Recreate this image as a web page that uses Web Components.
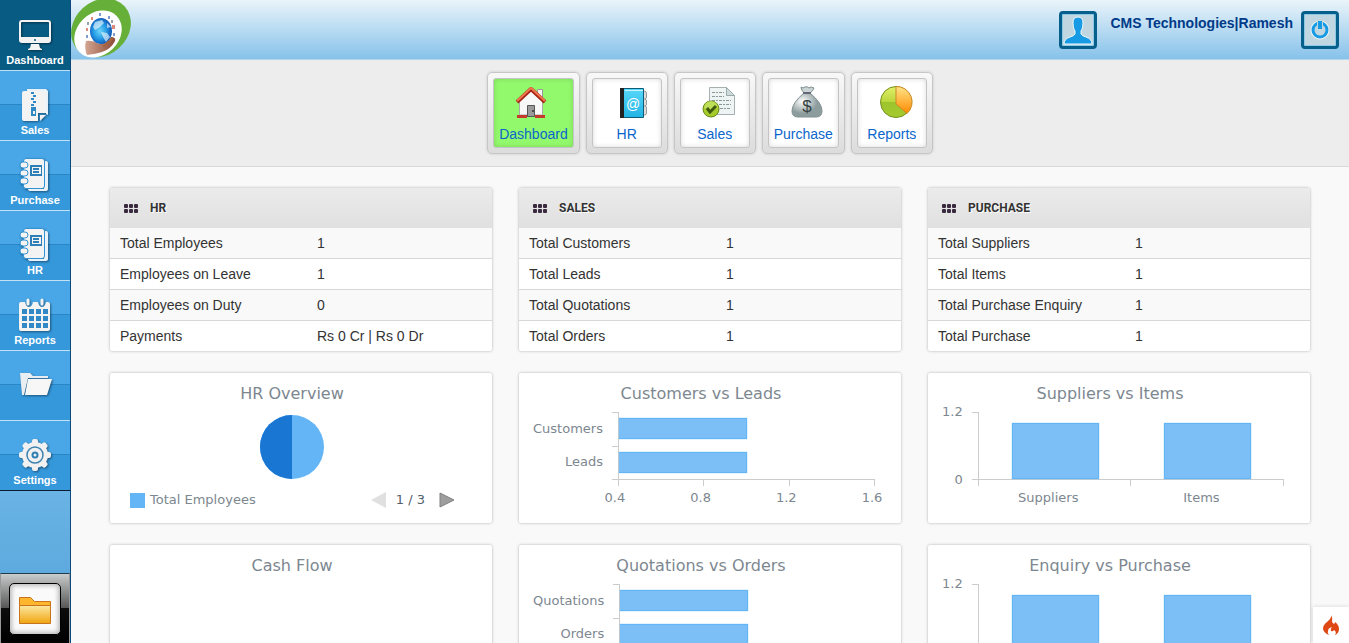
<!DOCTYPE html>
<html lang="en">
<head>
<meta charset="utf-8">
<meta name="viewport" content="width=device-width, initial-scale=1">
<title>Dashboard</title>
<style>
  body {
    margin: 0;
    font-family: "Liberation Sans", Arial, sans-serif;
    font-size: 14px;
    color: #333;
    background: #f9f9f9;
  }
</style>
</head>
<body>
<app-shell>
  <side-bar slot="side">
    <side-item icon="monitor" label="Dashboard" active></side-item>
    <side-item icon="zip" label="Sales"></side-item>
    <side-item icon="notebook" label="Purchase"></side-item>
    <side-item icon="notebook" label="HR"></side-item>
    <side-item icon="calendar" label="Reports"></side-item>
    <side-item icon="folder"></side-item>
    <side-item icon="gear" label="Settings"></side-item>
  </side-bar>
  <top-bar slot="top">CMS Technologies|Ramesh</top-bar>
  <tab-bar slot="tabs">
    <tab-item icon="house" active>Dashboard</tab-item>
    <tab-item icon="book">HR</tab-item>
    <tab-item icon="document">Sales</tab-item>
    <tab-item icon="money">Purchase</tab-item>
    <tab-item icon="pie">Reports</tab-item>
  </tab-bar>
  <stat-panel heading="HR" rows="Total Employees:1;Employees on Leave:1;Employees on Duty:0;Payments:Rs 0 Cr | Rs 0 Dr"></stat-panel>
  <stat-panel heading="SALES" rows="Total Customers:1;Total Leads:1;Total Quotations:1;Total Orders:1"></stat-panel>
  <stat-panel heading="PURCHASE" rows="Total Suppliers:1;Total Items:1;Total Purchase Enquiry:1;Total Purchase:1"></stat-panel>
  <chart-card heading="HR Overview"><pie-chart legend="Total Employees" pages="3"></pie-chart></chart-card>
  <chart-card heading="Customers vs Leads"><bar-chart min="0.4" max="1.6" ticks="0.4,0.8,1.2,1.6" data="Customers:1;Leads:1"></bar-chart></chart-card>
  <chart-card heading="Suppliers vs Items"><column-chart max="1.2" data="Suppliers:1;Items:1"></column-chart></chart-card>
  <chart-card heading="Cash Flow"></chart-card>
  <chart-card heading="Quotations vs Orders"><bar-chart min="0.4" max="1.6" ticks="0.4,0.8,1.2,1.6" data="Quotations:1;Orders:1"></bar-chart></chart-card>
  <chart-card heading="Enquiry vs Purchase"><column-chart max="1.2" data="Enquiry:1;Purchase:1"></column-chart></chart-card>
  <flame-badge slot="badge"></flame-badge>
</app-shell>

<script>
const sideIcons = {
  monitor: `
    <path fill="#f3f3f3" fill-rule="evenodd" d="M3 1h26q3 0 3 3v17q0 3-3 3H3q-3 0-3-3V4q0-3 3-3zM3 3q-1 0-1 1v14h28V4q0-1-1-1z"/>
    <circle cx="16" cy="21" r="1" fill="#0a5c80"/>
    <path fill="#f3f3f3" d="M12 25h8l1 4 2 1v1H9v-1l2-1z"/>`,
  zip: `
    <path fill="#e8f2fa" d="M8 0h19l2 2v24l-2-1V2H8z"/>
    <path fill="#f3f3f3" d="M5 2h22v22h-8v8H5q-2 0-2-2V4q0-2 2-2z"/>
    <path fill="#f3f3f3" d="M21 26h6l-6 6z"/>
    <path fill="#3089c4" d="M12 3h3v2h-3zm2 3h3v2h-3zm-2 3h3v2h-3zm2 3h3v2h-3zm-2 3h3v2h-3z"/>
    <path fill="#3089c4" fill-rule="evenodd" d="M12 18h5v9h-5zm2 4v3h2v-3z"/>`,
  notebook: `
    <path fill="#e8f2fa" d="M25 2h2q2 0 2 2v26q0 2-2 2H12q-3 0-3-2h16z"/>
    <path fill="#f3f3f3" stroke="#3393d2" d="M7-.5h16q2.500 0 2.500 2.500v25q0 2.500-2.500 2.500H7q-2.500 0-2.500-2.500V2Q4.500-.5 7-.5z"/>
    <g fill="#f3f3f3" stroke="#3393d2"><rect x="1" y="3" width="8" height="6" rx="3"/><rect x="1" y="11" width="8" height="6" rx="3"/><rect x="1" y="19" width="8" height="6" rx="3"/></g>
    <path fill="#2e7eb7" fill-rule="evenodd" d="M11 6h12v11H11zm2 2v7h9V8z"/>
    <path stroke="#2e7eb7" stroke-width="2" d="M14 10h6M14 13h6"/>`,
  calendar: `
    <path fill="#f3f3f3" d="M2 3h4q1 5 4 5t4-5h5q1 5 4 5t4-5h2q2 0 2 2v25q0 2-2 2H2q-2 0-2-2V5q0-2 2-2z"/>
    <path stroke="#f3f3f3" stroke-width="3" stroke-linecap="round" d="M9 1v4M23 1v4"/>
    <path fill="#3089c4" d="M3 10h5v5H3zm7 0h5v5h-5zm7 0h5v5h-5zm7 0h5v5h-5zM3 17h5v5H3zm7 0h5v5h-5zm7 0h5v5h-5zm7 0h5v5h-5zM3 24h5v5H3zm7 0h5v5h-5zm7 0h5v5h-5zm7 0h5v5h-5z"/>`,
  folder: `
    <path fill="#e8eef2" d="M1 4h10l3 3h15v2H9L5 26H3z"/>
    <path fill="#f7f7f7" d="M9 10h24l-5 16H6z"/>`,
  gear: `
    <g fill="#f1f1f1">
      <circle cx="16" cy="16" r="13"/>
      <rect x="13" width="6" height="32" rx="2"/>
      <rect x="13" width="6" height="32" rx="2" transform="rotate(45 16 16)"/>
      <rect x="13" width="6" height="32" rx="2" transform="rotate(90 16 16)"/>
      <rect x="13" width="6" height="32" rx="2" transform="rotate(135 16 16)"/>
    </g>
    <circle cx="16" cy="16" r="8" fill="none" stroke="#3d82b0" stroke-width="1.500"/>
    <circle cx="16" cy="16" r="2.500" fill="none" stroke="#2f7fb5" stroke-width="2"/>`
};

const tabIcons = {
  house: `
    <path fill="#f4f4f4" stroke="#999" d="M22.500 3.500h5v12h-5z"/>
    <path fill="#f8f8f8" stroke="#aaa" d="M4.500 14 16 3l11.500 11v15h-23z"/>
    <path fill="#9a9a9a" stroke="#555" d="M12.500 19.500h7v11h-7z"/>
    <circle cx="18" cy="25" r="1" fill="#333"/>
    <path fill="none" stroke="#a52516" stroke-width="4" stroke-linejoin="round" d="M2 16 16 3l14 13"/>
    <path fill="none" stroke="#f07850" stroke-width="2" stroke-linejoin="round" d="M2 15 16 2l14 13"/>
    <path fill="#c63a2b" d="M2 29h10v3H2zm18 0h10v3H20z"/>`,
  book: `
    <path fill="#ddd" stroke="#999" d="M27 5h2.500q2 0 2 3v4l-2 1 2 1v5l-2 1 2 1v6q0 2-2 2H27z"/>
    <defs><linearGradient id="bk" x2="0" y2="1"><stop stop-color="#58d8fb"/><stop offset="1" stop-color="#22b4e4"/></linearGradient></defs>
    <path fill="url(#bk)" stroke="#0c5d78" d="M5.500 2.500h23v29h-23z"/>
    <path stroke="#c9f3ff" d="M10 4.500h18"/>
    <path fill="#222" d="M5 2h4v30H5z"/>
    <text x="18" y="23" font-family="Liberation Sans" font-size="14" fill="#fff" text-anchor="middle">@</text>`,
  document: `
    <path fill="#eef3f3" stroke="#a5b1b1" d="M6.500 1.500h17l8 8v19h-25z"/>
    <path fill="#d0dada" stroke="#9aa" d="M23.500 1.500v8h8z"/>
    <path stroke="#8c9999" stroke-dasharray="3 1 2 1" d="M9 6.500h12M9 10.500h12M9 14.500h19M9 18.500h19M17 22.500h11"/>
    <circle cx="8" cy="23" r="8" fill="#a5cc2b" stroke="#688a12"/>
    <path fill="#cbe66b" opacity=".7" d="M1 22a7 7 0 0 1 14 0q-7 3-14 0z"/>
    <path fill="none" stroke="#3f5a0b" stroke-width="3" d="m4 22 3 4 6-6"/>`,
  money: `
    <defs><radialGradient id="bag" cx=".35" cy=".35"><stop stop-color="#fff"/><stop offset="1" stop-color="#8d9c9d"/></radialGradient></defs>
    <path fill="#ccd5d5" stroke="#7d8c8c" d="M10 1q2 2 4 0 2-1 4 1 2-2 5 0-1 3-4 5h-6q-3-3-3-6z"/>
    <path fill="url(#bag)" stroke="#819090" d="M13 7h6q12 10 12 18 0 6-6 6H7q-6 0-6-6Q1 17 13 7z"/>
    <path stroke="#667" stroke-width="2" d="M12 7h8"/>
    <text x="16" y="26" font-family="Liberation Sans" font-size="17" fill="#354242" text-anchor="middle">$</text>`,
  pie: `
    <defs>
      <linearGradient id="pg" x2="0" y2="1"><stop stop-color="#e2ef68"/><stop offset=".5" stop-color="#bad63c"/><stop offset=".5" stop-color="#9cc42c"/><stop offset="1" stop-color="#a5cb2e"/></linearGradient>
      <linearGradient id="po" x2="0" y2="1"><stop stop-color="#ffe487"/><stop offset="1" stop-color="#ff8a00"/></linearGradient>
    </defs>
    <circle cx="16" cy="16" r="15.500" fill="url(#pg)" stroke="#76901f"/>
    <path fill="url(#po)" stroke="#c98a28" d="M16 .5a15.500 15.500 0 0 1 11 27L16 18z"/>`
};

const pairs = (text) => (text || '').split(';').filter(Boolean).map((row) => row.split(':'));

class AppShell extends HTMLElement {
  constructor() {
    super();
    this.attachShadow({ mode: 'open' }).innerHTML = `
      <style>
        :host {
          display: grid;
          grid-template-columns: auto 1fr;
          height: 100vh;
        }
        .page {
          min-width: 0;
          overflow: hidden auto;
          scrollbar-width: none;
        }
        main {
          display: grid;
          grid-template-columns: repeat(3, minmax(0, 1fr));
          gap: 22px 27px;
          padding: 21px 39px;
        }
      </style>
      <slot name="side"></slot>
      <div class="page">
        <slot name="top"></slot>
        <slot name="tabs"></slot>
        <main><slot></slot></main>
      </div>
      <slot name="badge"></slot>
    `;
  }
}

class SideBar extends HTMLElement {
  constructor() {
    super();
    this.attachShadow({ mode: 'open' }).innerHTML = `
      <style>
        :host {
          display: flex;
          flex-direction: column;
          width: 70px;
          min-height: 0;
          overflow: hidden;
          border-right: 1px solid #0b4a7a;
          background: #3598db;
        }
        .fill {
          flex: 1;
          border-top: 1px solid #0b1a2c;
          background: linear-gradient(#69b3e5, #5eaade);
        }
        .dock {
          display: grid;
          place-items: center;
          height: 70px;
          padding: 0;
          border: 1px solid #999;
          border-width: 0 1px;
          border-top: 1px solid #1f3a4d;
          background: linear-gradient(#c9cccc, #555 50%, #0c0c0c 50%, #000);
        }
        .dock svg {
          padding: 8px;
          border: 1px solid #000;
          border-radius: 5px;
          background: #fafafa;
          box-shadow: inset 0 0 4px 2px #bbb;
        }
      </style>
      <nav><slot></slot></nav>
      <div class="fill"></div>
      <button class="dock" aria-label="Files">
        <svg width="34" height="34" viewBox="0 0 34 34">
          <defs><linearGradient id="fo" x2="0" y2="1"><stop stop-color="#fbe7a0"/><stop offset="1" stop-color="#f0a510"/></linearGradient></defs>
          <path fill="#ffb52e" stroke="#c8741d" d="M1.500 5.500h11l4 4h16v6h-31z"/>
          <path fill="url(#fo)" stroke="#c8741d" d="M1.500 13.500h31v18h-31z"/>
        </svg>
      </button>
    `;
  }
}

class SideItem extends HTMLElement {
  connectedCallback() {
    const label = this.getAttribute('label') || '';
    this.attachShadow({ mode: 'open' }).innerHTML = `
      <style>
        :host { display: block; }
        a {
          display: flex;
          flex-direction: column;
          align-items: center;
          box-sizing: border-box;
          height: 70px;
          padding-top: 18px;
          border-top: 1px solid #c3e1f5;
          background: linear-gradient(#49a7e8 33px, #2b86c5 33px 34px, #3598db 34px);
          color: #fff;
          font-size: 11px;
          font-weight: bold;
          line-height: 18px;
          text-decoration: none;
        }
        :host([active]) a {
          background: #085c84;
          border-color: #085c84;
        }
        svg {
          flex: none;
          overflow: visible;
          filter: drop-shadow(1px 1px 1px rgba(0, 0, 0, .45));
        }
      </style>
      <a href="#" aria-label="${label || 'Documents'}">
        <svg width="32" height="32" viewBox="0 0 32 32">${sideIcons[this.getAttribute('icon')]}</svg>
        <span>${label}</span>
      </a>
    `;
  }
}

class TopBar extends HTMLElement {
  constructor() {
    super();
    this.attachShadow({ mode: 'open' }).innerHTML = `
      <style>
        :host { display: block; }
        header {
          display: flex;
          align-items: flex-start;
          height: 59px;
          padding-right: 10px;
          border-bottom: 1px solid #b5d5ea;
          background: linear-gradient(#eaf4fa, #86c2ea);
        }
        .logo { margin-right: auto; }
        .logo svg { display: block; }
        .box {
          display: grid;
          place-items: center;
          box-sizing: border-box;
          width: 38px;
          height: 38px;
          margin-top: 11px;
          padding: 0;
          border: 3px solid #075f8b;
          border-radius: 4px;
          background: #c0d6e0;
          box-shadow: inset 0 0 0 1px #8ec9e6;
        }
        .user {
          margin: 14px 8px 0 13px;
          color: #003a88;
          font-size: 14px;
          font-weight: bold;
          line-height: 18px;
          text-decoration: none;
        }
      </style>
      <header>
        <a class="logo" href="#" aria-label="Home">
          <svg width="61" height="59" viewBox="0 0 61 59">
            <defs>
              <radialGradient id="gl" cx=".45" cy=".5"><stop stop-color="#6fd5f8"/><stop offset=".6" stop-color="#249be5"/><stop offset="1" stop-color="#1460bd"/></radialGradient>
              <linearGradient id="hd"><stop stop-color="#d3a592"/><stop offset="1" stop-color="#8c4b36"/></linearGradient>
            </defs>
            <ellipse cx="30" cy="28" rx="32" ry="27" transform="rotate(-42 30 28)" fill="#66b03a"/>
            <ellipse cx="27" cy="34" rx="26" ry="21" transform="rotate(-44 27 34)" fill="#fff"/>
            <g fill="#e08a7a"><path d="M20 17h2v3h-2zM15 28h2v3h-2zM41 25h3v4h-3z"/></g>
            <g fill="#7f9ccc"><path d="M28 13h2v3h-2zM37 16h2v3h-2zM15 35h2v3h-2zM42 33h2v3h-2z"/></g>
            <g fill="#9aa0ae"><path d="M16 22h2v3h-2zM40 20h2v3h-2z"/></g>
            <path fill="url(#hd)" d="M15 41q7-1 13 3 8-1 12-7 5 0 4 4-4 8-13 11-6 2-15 3-3-7-1-14z"/>
            <ellipse cx="30" cy="31" rx="11" ry="13" fill="url(#gl)"/>
            <path fill="#fff" opacity=".6" d="m24 22 7-2 2 3-4 4-5 3-2-3zm6 10 6 1 3 4-4 5-3-5zM36 23l4 4-4 1z"/>
            <path fill="none" stroke="#a8643e" stroke-width="2" stroke-linecap="round" d="m33 46 8-7"/>
          </svg>
        </a>
        <span class="box">
          <svg width="30" height="30" viewBox="0 0 30 30">
            <path fill="#189be5" stroke="#eef8fc" d="M10 8q0-6 5-6t5 6q0 6-2 8v3q1 2 5 3 6 2 6 7H1q0-5 6-7 4-1 5-3v-3q-2-2-2-8z"/>
          </svg>
        </span>
        <a class="user" href="#"><slot></slot></a>
        <button class="box" aria-label="Log out">
          <svg width="22" height="22" viewBox="0 0 22 22" fill="none">
            <circle cx="11" cy="11" r="8" stroke="#eaf6fb" stroke-width="3"/>
            <circle cx="11" cy="11" r="7" stroke="#189be5" stroke-width="3"/>
            <path stroke="#c0d6e0" stroke-width="6" d="M11 1v7"/>
            <path stroke="#189be5" stroke-width="4" d="M11 2v8"/>
          </svg>
        </button>
      </header>
    `;
  }
}

class TabBar extends HTMLElement {
  constructor() {
    super();
    this.attachShadow({ mode: 'open' }).innerHTML = `
      <style>
        :host { display: block; }
        nav {
          display: flex;
          justify-content: center;
          gap: 6px;
          padding: 12px 0;
          border-bottom: 1px solid #d8d8d8;
          background: #ededed;
        }
      </style>
      <nav><slot></slot></nav>
    `;
  }
}

class TabItem extends HTMLElement {
  connectedCallback() {
    this.attachShadow({ mode: 'open' }).innerHTML = `
      <style>
        :host {
          display: block;
          padding: 5px;
          border: 1px solid #c6c6c6;
          border-radius: 5px;
          background: linear-gradient(#f8f8f8, #dcdcdc);
          box-shadow: 0 0 3px rgba(0, 0, 0, .15);
        }
        a {
          display: flex;
          flex-direction: column;
          align-items: center;
          box-sizing: border-box;
          height: 70px;
          min-width: 70px;
          padding: 7px 5px 0;
          border: 1px solid #c4c4c4;
          border-radius: 3px;
          background: #fff;
          box-shadow: inset 0 0 5px rgba(0, 0, 0, .15);
          color: #0a66cc;
          line-height: 16px;
          text-decoration: none;
        }
        svg {
          flex: none;
          margin: 0 0 8px 8px;
          overflow: visible;
        }
        :host([active]) a { background: #92f96c; }
        :host([active]) svg { margin: 0 4px 8px 0; }
      </style>
      <a href="#">
        <svg width="32" height="32" viewBox="0 0 32 32">${tabIcons[this.getAttribute('icon')]}</svg>
        <slot></slot>
      </a>
    `;
  }
}

class StatPanel extends HTMLElement {
  connectedCallback() {
    const rows = pairs(this.getAttribute('rows'))
      .map(([name, value]) => `<tr><th scope="row">${name}</th><td>${value}</td></tr>`)
      .join('');
    this.attachShadow({ mode: 'open' }).innerHTML = `
      <style>
        :host {
          display: block;
          border-radius: 2px;
          background: #fff;
          box-shadow: 0 0 3px rgba(0, 0, 0, .3);
        }
        h2 {
          display: flex;
          align-items: center;
          gap: 11px;
          height: 40px;
          margin: 0;
          padding-left: 14px;
          background: linear-gradient(#ebebeb, #e0e0e0);
          color: #333;
          font: bold 12px/16px Roboto, sans-serif;
          text-shadow: 1px 1px 0 #fff;
        }
        table {
          width: 100%;
          table-layout: fixed;
          border-collapse: collapse;
        }
        th, td {
          height: 30px;
          padding: 0 10px;
          border-bottom: 1px solid #d8d8d8;
          font-weight: normal;
          line-height: 16px;
          text-align: left;
          white-space: nowrap;
        }
        th { width: 177px; }
        tr:nth-child(odd) { background: #f9f9f9; }
        tr:last-child > * { border-bottom: 0; }
      </style>
      <h2>
        <svg width="15" height="9" viewBox="0 0 15 9" fill="#3a2a3e">
          <rect width="4" height="4" rx="1"/><rect x="5" width="4" height="4" rx="1"/><rect x="10" width="4" height="4" rx="1"/>
          <rect y="5" width="4" height="4" rx="1"/><rect x="5" y="5" width="4" height="4" rx="1"/><rect x="10" y="5" width="4" height="4" rx="1"/>
        </svg>
        ${this.getAttribute('heading')}
      </h2>
      <table><tbody>${rows}</tbody></table>
    `;
  }
}

class ChartCard extends HTMLElement {
  connectedCallback() {
    this.attachShadow({ mode: 'open' }).innerHTML = `
      <style>
        :host {
          display: block;
          box-sizing: border-box;
          min-height: 150px;
          padding: 11px 18px 12px 0;
          border-radius: 2px;
          background: #fff;
          box-shadow: 0 0 3px rgba(0, 0, 0, .3);
          color: #7d8790;
          font-family: "DejaVu Sans", Verdana, sans-serif;
          font-size: 13px;
          line-height: 16px;
        }
        h3 {
          margin: 0 0 8px;
          font-size: 16px;
          font-weight: normal;
          line-height: 20px;
          text-align: center;
        }
      </style>
      <h3>${this.getAttribute('heading')}</h3>
      <slot></slot>
    `;
  }
}

class PieChart extends HTMLElement {
  connectedCallback() {
    this.attachShadow({ mode: 'open' }).innerHTML = `
      <style>
        :host {
          display: block;
          padding-top: 3px;
        }
        .pie {
          display: block;
          margin: 0 auto 13px;
        }
        .legend {
          display: flex;
          align-items: center;
          padding: 0 19px 0 20px;
        }
        .key {
          width: 15px;
          height: 15px;
          margin-right: 5px;
          background: #64b5f6;
        }
        .pager {
          display: flex;
          align-items: center;
          gap: 10px;
          margin-left: auto;
          color: #545f69;
        }
        button {
          display: block;
          padding: 0;
          border: 0;
          background: none;
        }
        button svg { display: block; }
        .next { margin-left: 4px; }
      </style>
      <svg class="pie" width="64" height="64" viewBox="0 0 64 64">
        <circle cx="32" cy="32" r="32" fill="#64b5f6"/>
        <path fill="#1976d2" d="M32 0a32 32 0 0 0 0 64z"/>
      </svg>
      <div class="legend">
        <span class="key"></span>${this.getAttribute('legend')}
        <div class="pager">
          <button aria-label="Previous" disabled><svg width="15" height="16" viewBox="0 0 15 16"><path fill="#e0e0e0" d="M15 0v16L0 8z"/></svg></button>
          <span>1 / ${this.getAttribute('pages')}</span>
          <button class="next" aria-label="Next"><svg width="16" height="16" viewBox="0 0 16 16"><path fill="#9e9e9e" stroke="#808080" d="M1 1v14l14-7z"/></svg></button>
        </div>
      </div>
    `;
  }
}

class BarChart extends HTMLElement {
  connectedCallback() {
    const min = Number(this.getAttribute('min'));
    const max = Number(this.getAttribute('max'));
    const data = pairs(this.getAttribute('data'));
    const ticks = this.getAttribute('ticks').split(',');
    this.attachShadow({ mode: 'open' }).innerHTML = `
      <style>
        :host {
          display: grid;
          grid-template-columns: auto 1fr;
          padding: 0 8px 0 14px;
        }
        .names, .plot {
          display: grid;
          grid-auto-rows: 1fr;
          height: 67px;
          align-items: center;
        }
        .names {
          padding-right: 9px;
          text-align: right;
        }
        .plot { border-bottom: 1px solid #ccc; }
        .row {
          display: flex;
          align-items: center;
          align-self: stretch;
        }
        /* category tick and its piece of the axis line */
        .row::before {
          content: "";
          align-self: stretch;
          width: 6px;
          border-top: 1px solid #ccc;
          border-right: 1px solid #ccc;
        }
        .track { flex: 1; }
        .bar {
          box-sizing: border-box;
          height: 21px;
          border: 1px solid #64b5f6;
          border-left: 0;
          background: #7cbff7;
          box-shadow: 0 0 1px #64b5f6;
        }
        .scale {
          grid-column: 2;
          display: flex;
          justify-content: space-between;
          margin-left: 6px;
        }
        .scale i {
          width: 1px;
          height: 6px;
          background: #ccc;
        }
        .values { margin: 4px 3px 0; }
        .values span {
          display: flex;
          justify-content: center;
          width: 0;
        }
      </style>
      <div class="names">${data.map(([name]) => `<span>${name}</span>`).join('')}</div>
      <div class="plot">${data.map(([, value]) => `
        <div class="row"><div class="track"><div class="bar" style="width: ${Math.round((value - min) / (max - min) * 100)}%"></div></div></div>`).join('')}
      </div>
      <div class="scale">${ticks.map(() => '<i></i>').join('')}</div>
      <div class="scale values">${ticks.map((tick) => `<span>${tick}</span>`).join('')}</div>
    `;
  }
}

class ColumnChart extends HTMLElement {
  connectedCallback() {
    const max = Number(this.getAttribute('max'));
    const data = pairs(this.getAttribute('data'));
    this.attachShadow({ mode: 'open' }).innerHTML = `
      <style>
        :host {
          display: grid;
          grid-template-columns: auto 1fr;
          padding: 0 8px 0 14px;
        }
        .limits {
          display: flex;
          flex-direction: column;
          justify-content: space-between;
          height: 84px;
          margin: -8px 9px -8px 0;
          text-align: right;
        }
        .plot {
          display: flex;
          height: 68px;
        }
        .plot::before {
          content: "";
          box-sizing: border-box;
          width: 7px;
          border: solid #ccc;
          border-width: 1px 1px 1px 0;
        }
        .bars {
          flex: 1;
          display: grid;
          grid-auto-flow: column;
          grid-auto-columns: 1fr;
          align-items: end;
          justify-items: center;
          border-bottom: 1px solid #ccc;
        }
        .bar {
          box-sizing: border-box;
          width: 57%;
          border: 1px solid #64b5f6;
          background: #7cbff7;
          box-shadow: 0 0 1px #64b5f6;
        }
        .ticks, .names {
          grid-column: 2;
          display: flex;
          margin-left: 6px;
        }
        .ticks {
          justify-content: space-between;
        }
        .ticks i {
          width: 1px;
          height: 6px;
          background: #ccc;
        }
        .names {
          margin: 4px 6px 0 0;
        }
        .names span {
          flex: 1;
          text-align: center;
        }
      </style>
      <div class="limits"><span>${max}</span><span>0</span></div>
      <div class="plot"><div class="bars">${data.map(([, value]) => `<div class="bar" style="height: ${Math.round(value / max * 100)}%"></div>`).join('')}</div></div>
      <div class="ticks"><i></i>${data.map(() => '<i></i>').join('')}</div>
      <div class="names">${data.map(([name]) => `<span>${name}</span>`).join('')}</div>
    `;
  }
}

class FlameBadge extends HTMLElement {
  constructor() {
    super();
    this.attachShadow({ mode: 'open' }).innerHTML = `
      <style>
        :host {
          position: fixed;
          right: 0;
          bottom: 0;
        }
        button {
          display: grid;
          place-items: center;
          width: 36px;
          height: 36px;
          padding: 0;
          border: 0;
          background: #fff;
          box-shadow: 0 0 4px rgba(0, 0, 0, .15);
        }
      </style>
      <button aria-label="Debug toolbar">
        <svg width="16" height="20" viewBox="0 0 16 20">
          <path fill="#dd4814" d="M8 0q2 3 1 6 0 2 2 3 1-1 1-2 4 3 4 7 0 4-4 6 2-3-1-5-1 2-3 1-1-2 1-4-4 1-4 4-1 2 1 4-5-2-6-6 0-4 4-7 5-4 4-7z"/>
        </svg>
      </button>
    `;
  }
}

customElements.define('app-shell', AppShell);
customElements.define('side-bar', SideBar);
customElements.define('side-item', SideItem);
customElements.define('top-bar', TopBar);
customElements.define('tab-bar', TabBar);
customElements.define('tab-item', TabItem);
customElements.define('stat-panel', StatPanel);
customElements.define('chart-card', ChartCard);
customElements.define('pie-chart', PieChart);
customElements.define('bar-chart', BarChart);
customElements.define('column-chart', ColumnChart);
customElements.define('flame-badge', FlameBadge);
</script>
</body>
</html>
